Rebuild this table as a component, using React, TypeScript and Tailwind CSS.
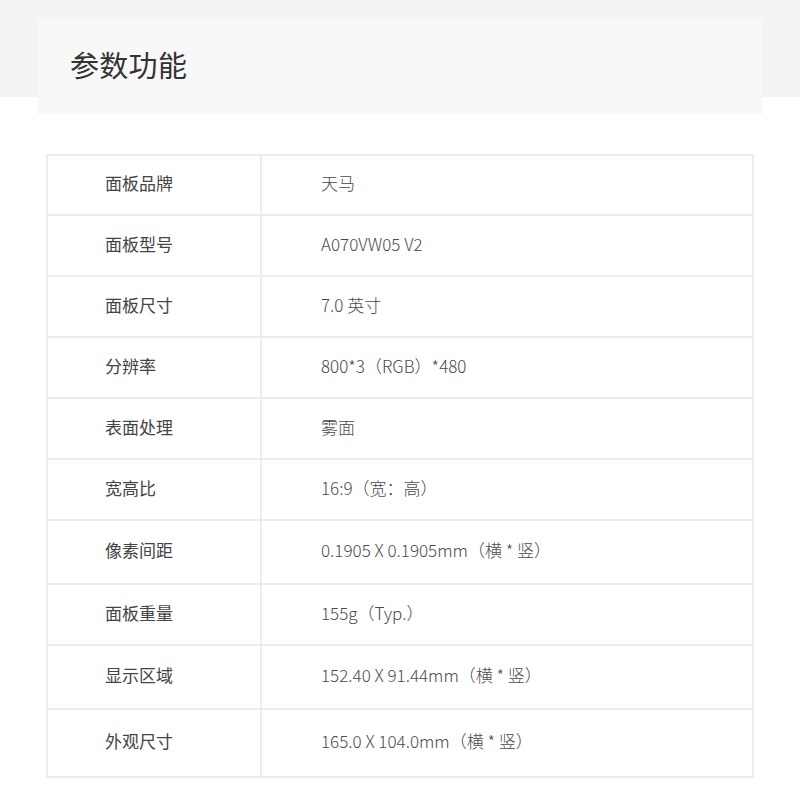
/**
 * 参数功能 — 面板参数表
 */

const specs: { label: string; value: string; h: string }[] = [
  { label: "面板品牌", value: "天马", h: "h-[60px]" },
  { label: "面板型号", value: "A070VW05 V2", h: "h-[61px]" },
  { label: "面板尺寸", value: "7.0 英寸", h: "h-[61px]" },
  { label: "分辨率", value: "800*3（RGB）*480", h: "h-[61px]" },
  { label: "表面处理", value: "雾面", h: "h-[61px]" },
  { label: "宽高比", value: "16:9（宽：高）", h: "h-[61px]" },
  { label: "像素间距", value: "0.1905 X 0.1905mm（横 * 竖）", h: "h-[64px]" },
  { label: "面板重量", value: "155g（Typ.）", h: "h-[61px]" },
  { label: "显示区域", value: "152.40 X 91.44mm（横 * 竖）", h: "h-[64px]" },
  { label: "外观尺寸", value: "165.0 X 104.0mm（横 * 竖）", h: "h-[68px]" },
];

export default function App() {
  return (
    <div className="w-[800px] h-[800px] bg-white font-['Noto_Sans_CJK_SC','Noto_Sans',sans-serif] bg-[linear-gradient(to_bottom,#f3f3f3_97px,#ffffff_97px)] pt-[19px]">
      {/* 标题卡片 */}
      <div className="mx-[37px] h-[95px] bg-[#f8f8f8] flex items-center pl-[33px] pb-[4px]">
        <h2 className="text-[29px] leading-none text-[#333333] tracking-[0.3px]">参数功能</h2>
      </div>

      {/* 参数表 */}
      <div className="mx-[46px] mt-[40px] border-2 border-b-0 border-[#ececec]">
        {specs.map((s) => (
          <div key={s.label} className={`flex border-b-2 border-[#ececec] ${s.h}`}>
            <div className="w-[214px] border-r-2 border-[#ececec] flex items-center pl-[57px] pb-[4px] text-[17px] text-[#444444]">
              {s.label}
            </div>
            <div className="flex-1 flex items-center pl-[59px] pb-[4px] text-[17px] font-light text-[#4a4a4a]">
              {s.value}
            </div>
          </div>
        ))}
      </div>
    </div>
  );
}
